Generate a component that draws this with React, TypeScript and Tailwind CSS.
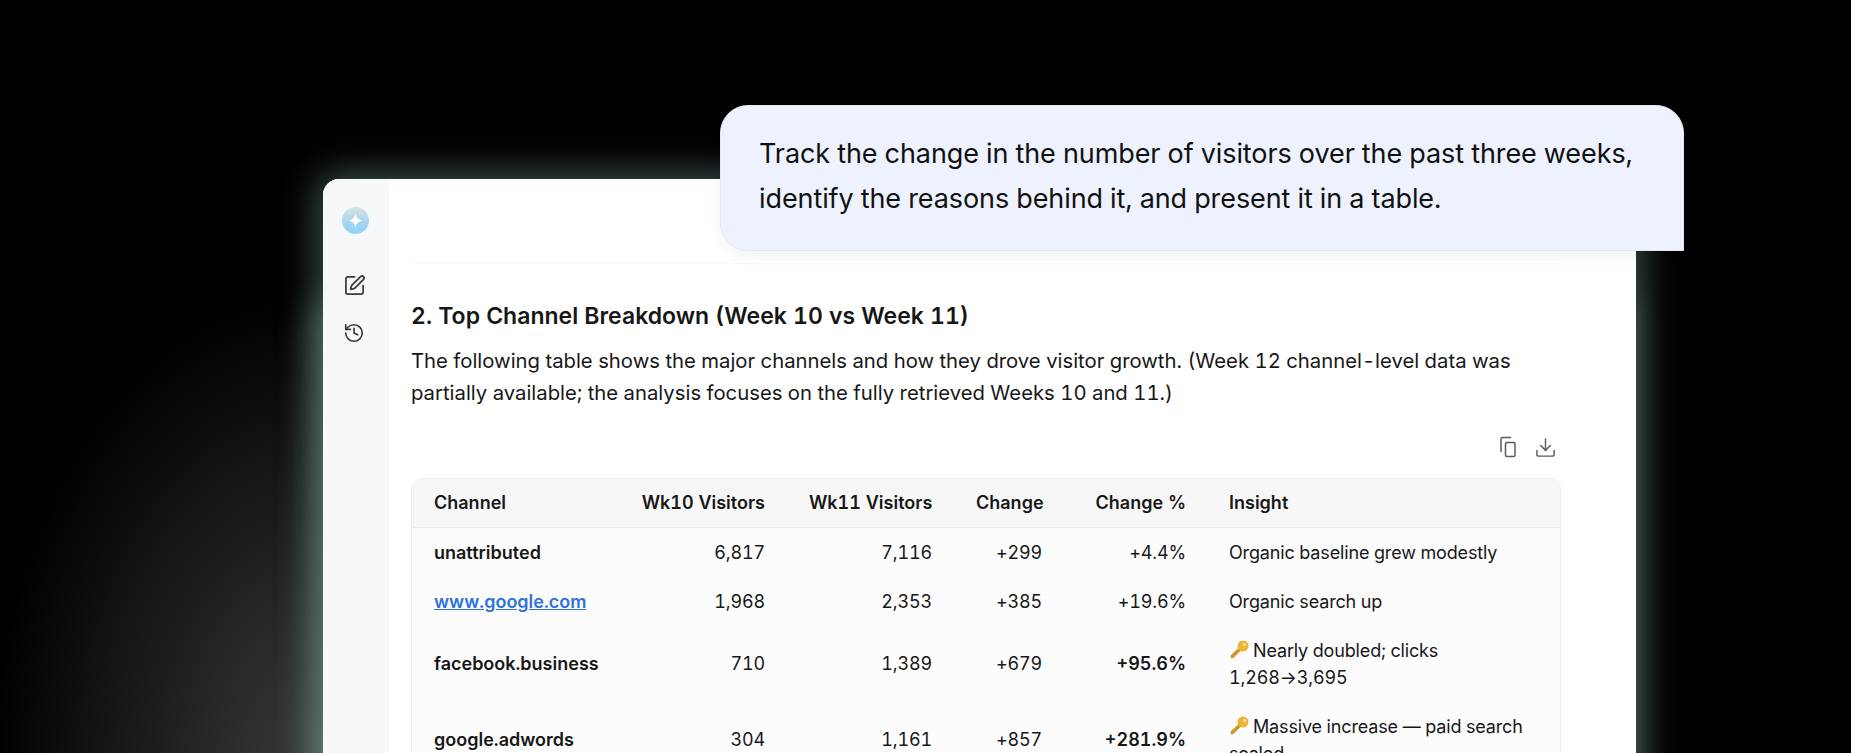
import { Download, History, SquarePen } from "lucide-react";

const rows = [
  { channel: "unattributed", wk10: "6,817", wk11: "7,116", change: "+299", pct: "+4.4%", insight: "Organic baseline grew modestly" },
  { channel: "www.google.com", link: true, wk10: "1,968", wk11: "2,353", change: "+385", pct: "+19.6%", insight: "Organic search up" },
  { channel: "facebook.business", wk10: "710", wk11: "1,389", change: "+679", pct: "+95.6%", strong: true, key: true, insight: "Nearly doubled; clicks 1,268→3,695" },
  { channel: "google.adwords", wk10: "304", wk11: "1,161", change: "+857", pct: "+281.9%", strong: true, key: true, insight: "Massive increase — paid search scaled" },
];

function KeyIcon() {
  return (
    <svg viewBox="0 0 20 20" className="inline-block w-[20px] h-[20px] mr-[4px] align-[-3px]">
      <path d="M2 18.5 L1.5 15.5 L10 7.5 L12.5 10 L4.5 18 Z" fill="#c99a2e" />
      <circle cx="14" cy="6" r="5.5" fill="#eeb43a" />
      <circle cx="15.5" cy="4.5" r="1.5" fill="#fff" fillOpacity="0.65" />
    </svg>
  );
}

function CopyIcon() {
  return (
    <svg viewBox="0 0 24 24" fill="none" stroke="currentColor" strokeWidth="1.5" strokeLinecap="round" strokeLinejoin="round" className="h-[24px] w-[24px]">
      <rect x="9.5" y="7.5" width="9.5" height="14" rx="1.5" />
      <path d="M5 16.5 V4 a1.5 1.5 0 0 1 1.5 -1.5 H14.5" />
    </svg>
  );
}

function Logo() {
  return (
    <div className="w-[27px] h-[27px] -ml-[1px] rounded-full bg-gradient-to-b from-[#d9e3e0] via-[#a9d6ee] to-[#8fd0fb] flex items-center justify-center">
      <svg viewBox="0 0 16 16" className="w-[15px] h-[15px]">
        <path d="M8 0 C8.6 5 11 7.4 16 8 C11 8.6 8.6 11 8 16 C7.4 11 5 8.6 0 8 C5 7.4 7.4 5 8 0 Z" fill="#fff" />
      </svg>
    </div>
  );
}

export default function App() {
  return (
    <div
      className="relative h-[753px] w-[1851px] overflow-hidden bg-[radial-gradient(ellipse_330px_470px_at_323px_760px,#3a3d3c_0%,#202221_45%,#000_100%)] pt-[179px] pl-[323px] tabular-nums"
      style={{ fontFamily: "Inter, 'Liberation Sans', sans-serif" }}
    >
      <div className="flex h-[700px] w-[1313px] rounded-tl-[16px] bg-white shadow-[0_0_36px_6px_rgba(100,135,132,0.6),-8px_120px_36px_0_rgba(120,155,150,0.55)]">
        <aside className="flex w-[66px] shrink-0 flex-col items-center rounded-tl-[16px] bg-[#f6f8fa] pt-[28px] text-[#3a3a3a]">
          <Logo />
          <SquarePen size={23} strokeWidth={1.8} className="mt-[40px] -ml-[4px]" />
          <History size={22} strokeWidth={1.8} className="mt-[25px] -ml-[4px]" />
        </aside>

        <main className="flex-1 pl-[22px] pr-[75px] text-[#171717]">
          <div className="mt-[84px] h-px bg-[#f9f9f9]" />
          <h2 className="mt-[36px] text-[23px] leading-[32px] font-semibold">
            2. Top Channel Breakdown (Week 10 vs Week 11)
          </h2>
          <p className="mt-[13px] text-[20.3px] leading-[32px]">
            The following table shows the major channels and how they drove visitor growth. (Week 12 channel-level data was partially available; the analysis focuses on the fully retrieved Weeks 10 and 11.)
          </p>

          <div className="mt-[26px] flex h-[24px] items-center justify-end gap-[14px] pr-[4px] text-[#5a5a5a]">
            <CopyIcon />
            <Download size={23} strokeWidth={1.5} />
          </div>

          <div className="mt-[19px] overflow-hidden rounded-t-[12px] border border-[#ececec] bg-[#fcfcfc]">
            <table className="w-full table-fixed border-collapse text-[18px] leading-[27px] tracking-[-0.15px]">
              <colgroup>
                <col className="w-[207px]" />
                <col className="w-[168px]" />
                <col className="w-[167px]" />
                <col className="w-[110px]" />
                <col className="w-[144px]" />
                <col />
              </colgroup>
              <thead>
                <tr className="h-[48px] border-b border-[#ececec] bg-[#f7f7f7] whitespace-nowrap">
                  <th className="px-[22px] text-left font-semibold tracking-normal">Channel</th>
                  <th className="px-[22px] text-right font-semibold tracking-normal">Wk10 Visitors</th>
                  <th className="px-[22px] text-right font-semibold tracking-normal">Wk11 Visitors</th>
                  <th className="px-[22px] text-right font-semibold tracking-normal">Change</th>
                  <th className="px-[22px] text-right font-semibold tracking-normal">Change %</th>
                  <th className="pl-[21px] pr-[22px] text-left font-semibold tracking-normal">Insight</th>
                </tr>
              </thead>
              <tbody>
                {rows.map((r) => (
                  <tr key={r.channel}>
                    <td className="px-[22px] py-[11px] font-semibold tracking-normal">
                      {r.link ? <span className="text-[#2f73da] underline">{r.channel}</span> : r.channel}
                    </td>
                    <td className="px-[22px] py-[11px] text-right">{r.wk10}</td>
                    <td className="px-[22px] py-[11px] text-right">{r.wk11}</td>
                    <td className="px-[22px] py-[11px] text-right">{r.change}</td>
                    <td className={r.strong ? "px-[22px] py-[11px] text-right font-semibold tracking-normal" : "px-[22px] py-[11px] text-right"}>{r.pct}</td>
                    <td className="pl-[21px] pr-[22px] py-[11px]">
                      {r.key && <KeyIcon />}
                      {r.insight}
                    </td>
                  </tr>
                ))}
              </tbody>
            </table>
          </div>
        </main>
      </div>

      <div className="absolute left-[720px] top-[105px] h-[146px] w-[964px] rounded-[28px] rounded-br-none border border-[#e3e7ef] bg-[#edf2fe] px-[38px] pt-[25px] text-[27px] leading-[45px] tracking-[-0.09px] text-[#111] shadow-[0_6px_14px_rgba(0,0,0,0.05)]">
        Track the change in the number of visitors over the past three weeks, identify the reasons behind it, and present it in a table.
      </div>
    </div>
  );
}
